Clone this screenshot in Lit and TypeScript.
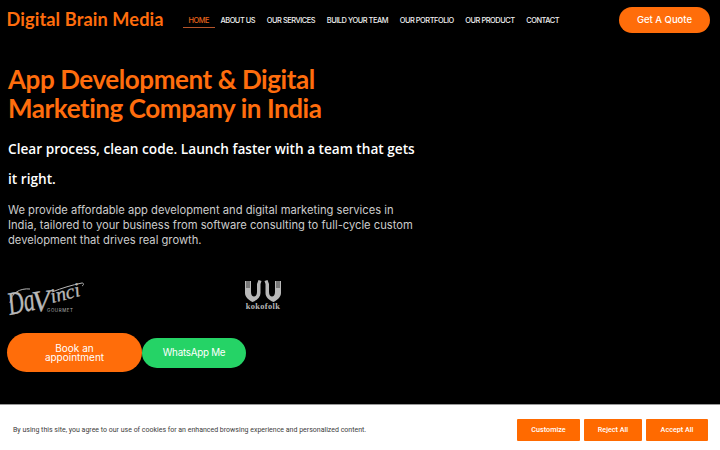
import { LitElement, html, css } from "lit";
import { customElement } from "lit/decorators.js";

@customElement("app-root")
export class AppRoot extends LitElement {
  static styles = css`
    :host { display: block; position: relative; width: 720px; height: 450px; overflow: hidden; background: #000; color: #fff; font-family: Inter, sans-serif; }
    * { box-sizing: border-box; }
    .header { display: flex; align-items: center; height: 40px; padding: 0 10px 0 6.5px; }
    .brand { font: 700 18.2px/1 Lato, sans-serif; color: #ff6d0d; width: 176.5px; letter-spacing: .1px; margin-top: -2px; }
    .nav { display: flex; flex: 1; align-items: center; }
    .nav a { font: 500 7.4px/7px Inter, sans-serif; letter-spacing: -.44px; color: #f1f1f1; padding: 3px 5.8px; text-transform: uppercase; white-space: nowrap; border-top: 1.5px solid transparent; border-bottom: 1.5px solid transparent; }
    .nav a.active { color: #e8641c; padding: 3px 5.5px; border-bottom-color: #b5542a; }
    .quote { width: 91px; height: 26px; border-radius: 13px; background: #ff6d0a; display: flex; align-items: center; justify-content: center; font: 500 9.5px/1 Inter, sans-serif; color: #fff; }
    .main { padding: 25px 0 0 8px; width: 430px; }
    h1 { margin: 0; font: 700 26px/29px Lato, sans-serif; letter-spacing: -.43px; color: #ff6d0d; }
    h2 { margin: 10.5px 0 0; font: 600 13.65px/30px "Open Sans", sans-serif; color: #fff; width: 412px; }
    .desc { margin: 9.5px 0 0; font: 400 11.2px/15px Inter, sans-serif; color: #cccccc; width: 410px; }
    .logos { display: flex; margin-top: 31px; height: 44px; }
    .davinci { display: block; width: 237px; height: 40px; overflow: visible; }
    .dv1 { font: italic 400 26px "Liberation Serif", serif; fill: #b8b8b8; stroke: #b8b8b8; stroke-width: .3px; }
    .dv2 { font: italic 400 30px "Liberation Serif", serif; fill: #b8b8b8; stroke: #b8b8b8; stroke-width: .3px; }
    .dv3 { font: italic 400 20px "Liberation Serif", serif; fill: #b8b8b8; stroke: #b8b8b8; stroke-width: .3px; }
    .gm { font: 400 4.4px Inter, sans-serif; letter-spacing: .6px; fill: #b0b0b0; }
    .koko { width: 36px; display: flex; flex-direction: column; align-items: center; color: #b8b8b8; }
    .kt { font: 700 8.4px/1 "Liberation Serif", serif; letter-spacing: .35px; white-space: nowrap; }
    .actions { display: flex; align-items: center; margin: 10px 0 0 -1px; }
    .book { width: 135px; height: 39px; border-radius: 20px; background: #ff6d0a; display: flex; align-items: center; justify-content: center; text-align: center; font: 400 10px/9px Inter, sans-serif; color: #fff; padding: 0 35px; }
    .wa { width: 104px; height: 30px; border-radius: 15px; background: #25d366; display: flex; align-items: center; justify-content: center; font: 400 9.8px/1 Inter, sans-serif; letter-spacing: -.25px; color: #fff; }
    .cookie { position: absolute; left: 0; right: 0; bottom: 0; height: 46px; background: #fff; border-top: 1px solid #999; display: flex; align-items: center; padding: 5px 12px 0 13px; }
    .cookie p { margin: 0; flex: 1; font: 400 7px/1 Roboto, sans-serif; color: #3c3c3c; }
    .btns { display: flex; gap: 4px; }
    .btns span { height: 22px; display: flex; align-items: center; justify-content: center; background: #ff6a00; border-radius: 1px; color: #fff; font: 500 7.2px/1 Roboto, sans-serif; }
    .b1 { width: 63px; } .b2 { width: 58px; } .b3 { width: 62px; }
  `;

  render() {
    const items = ["About us", "Our services", "Build your team", "Our portfolio", "Our product", "Contact"];
    return html`
      <div class="header">
        <div class="brand">Digital Brain Media</div>
        <nav class="nav">
          <a class="active">Home</a>
          ${items.map((i) => html`<a>${i}</a>`)}
        </nav>
        <div class="quote">Get A Quote</div>
      </div>
      <div class="main">
        <h1>App Development &amp; Digital<br />Marketing Company in India</h1>
        <h2>Clear process, clean code. Launch faster with a team that gets it right.</h2>
        <p class="desc">We provide affordable app development and digital marketing services in India, tailored to your business from software consulting to full-cycle custom development that drives real growth.</p>
        <div class="logos">
          <svg class="davinci" viewBox="0 0 237 40">
            <text class="dv1" transform="translate(2 36) rotate(-12) scale(.85 1.25)">Da</text>
            <text class="dv2" transform="translate(25 33) rotate(-6)">V</text>
            <text class="dv3" transform="translate(44 24) rotate(-14)">inci</text>
            <path d="M2 24C3 14 12 9 22 10M44 13C54 9 64 6 74 4c2 0 2 2 0 3" stroke="#b8b8b8" stroke-width="1" fill="none"/>
            <text class="gm" x="39" y="33">GOURMET</text>
          </svg>
          <div class="koko">
            <svg width="36" height="24" viewBox="0 0 36 24">
              <path d="M0 2h6v11c0 3 1.500 4.500 3 4.500s3-1.500 3-4.500V5l1.500-4 3 1-1 3v9c0 4-3 7-8 9-4-2-7.500-5-7.500-9z" fill="#b8b8b8"/>
              <path d="M36 2h-6v11c0 3-1.500 4.500-3 4.500s-3-1.500-3-4.500V5l-1.500-4-3 1 1 3v9c0 4 3 7 8 9 4-2 7.500-5 7.500-9z" fill="#b8b8b8"/>
              <path d="M2 1v8M4 1v8M32 1v8M34 1v8" stroke="#000" stroke-width=".7"/>
            </svg>
            <span class="kt">kokofolk</span>
          </div>
        </div>
        <div class="actions">
          <div class="book">Book an appointment</div>
          <div class="wa">WhatsApp Me</div>
        </div>
      </div>
      <div class="cookie">
        <p>By using this site, you agree to our use of cookies for an enhanced browsing experience and personalized content.</p>
        <div class="btns">
          <span class="b1">Customize</span><span class="b2">Reject All</span><span class="b3">Accept All</span>
        </div>
      </div>
    `;
  }
}
